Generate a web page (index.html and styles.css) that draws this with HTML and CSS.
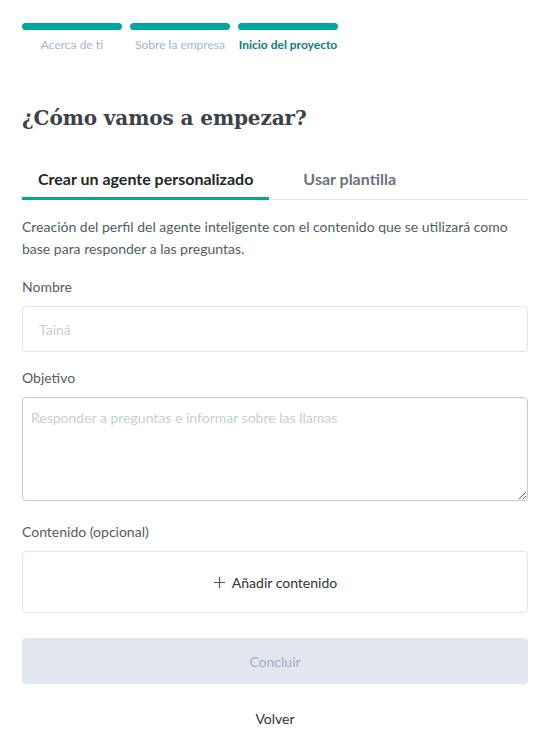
FILE: index.html
```html
<!doctype html>
<html lang="es">

<head>
    <meta charset="utf-8" />
    <meta name="viewport" content="width=device-width, initial-scale=1">
    <link rel="stylesheet" href="styles.css">
</head>

<body>
    <div class="page">
        <div class="steps">
            <div class="step done">
                <span class="bar"></span>
                <span class="steplabel">Acerca de ti</span>
            </div>
            <div class="step done">
                <span class="bar"></span>
                <span class="steplabel">Sobre la empresa</span>
            </div>
            <div class="step current">
                <span class="bar"></span>
                <span class="steplabel">Inicio del proyecto</span>
            </div>
        </div>

        <h1 class="title">¿Cómo vamos a empezar?</h1>

        <div class="tabs">
            <button class="tab active">Crear un agente personalizado</button>
            <button class="tab">Usar plantilla</button>
        </div>

        <p class="intro">
            Creación del perfil del agente inteligente con el contenido que se utilizará como
            base para responder a las preguntas.
        </p>

        <label class="field">
            <span class="fieldlabel">Nombre</span>
            <input class="input" type="text" placeholder="Tainá" />
        </label>

        <label class="field">
            <span class="fieldlabel">Objetivo</span>
            <textarea class="textarea" placeholder="Responder a preguntas e informar sobre las llamas"></textarea>
        </label>

        <div class="field content">
            <span class="fieldlabel">Contenido (opcional)</span>
            <button class="addbox">
                <svg width="13" height="13" viewBox="0 0 13 13">
                    <path d="M6.5 1v11M1 6.5h11" stroke="#555" stroke-width="1.2" fill="none" />
                </svg>
                Añadir contenido
            </button>
        </div>

        <button class="primary" disabled>Concluir</button>
        <button class="back">Volver</button>
    </div>
</body>

</html>
```

FILE: styles.css
```css
html {
    font-family: Lato, "Open Sans", sans-serif;
    font-size: 14px;
    color: #333;
}

body {
    margin: 0;
}

.page {
    padding: 23px 20px 0 22px;
    display: flex;
    flex-direction: column;
}

.steps {
    display: flex;
    gap: 8px;
}

.step {
    width: 100px;
    display: flex;
    flex-direction: column;
    align-items: center;
}

.bar {
    display: block;
    width: 100%;
    height: 7px;
    border-radius: 4px;
    background: #00a69c;
}

.steplabel {
    margin-top: 7px;
    font-size: 12px;
    line-height: 16px;
    color: #a9b1d6;
}

.current .steplabel {
    color: #0b7d7c;
    font-weight: 700;
}

.title {
    margin: 50px 0 0;
    font-family: "DejaVu Serif", serif;
    font-size: 20px;
    font-weight: 700;
    line-height: 30px;
    color: #3d414a;
    letter-spacing: -0.1px;
}

.tabs {
    margin-top: 29px;
    display: flex;
    border-bottom: 1px solid #e2e4e8;
}

.tab {
    font-family: inherit;
    font-size: 16px;
    font-weight: 700;
    line-height: 20px;
    background: none;
    border: none;
    padding: 7px 16px 8px;
    color: #6b7280;
    border-bottom: 3px solid transparent;
    margin-bottom: -1px;
    cursor: pointer;
}

.tab.active {
    color: #23262b;
    border-bottom-color: #00a69c;
}

.tab + .tab {
    padding-left: 34px;
}

.intro {
    margin: 16px 0 0;
    line-height: 22px;
    color: #555b66;
}

.field {
    display: flex;
    flex-direction: column;
    margin-top: 17px;
}

.fieldlabel {
    line-height: 20px;
    color: #555b66;
    margin-bottom: 9px;
}

.input,
.textarea {
    font-family: inherit;
    font-size: 14px;
    color: #333;
    border: 1px solid #e3e5ea;
    border-radius: 4px;
    box-sizing: border-box;
    width: 100%;
    outline: none;
}

.input {
    height: 46px;
    padding: 0 16px;
}

.textarea {
    height: 104px;
    padding: 10px 8px;
    border-color: #c8cacf;
    resize: vertical;
    line-height: 20px;
}

.input::placeholder,
.textarea::placeholder {
    color: #c9cdd5;
}

.field + .field {
    margin-top: 16px;
}

.field.content {
    margin-top: 21px;
}

.addbox {
    font-family: inherit;
    font-size: 14px;
    color: #333;
    height: 62px;
    background: #fff;
    border: 1px solid #e3e5ea;
    border-radius: 4px;
    display: flex;
    align-items: center;
    justify-content: center;
    gap: 6px;
    cursor: pointer;
}

.primary {
    margin-top: 25px;
    height: 46px;
    font-family: inherit;
    font-size: 14px;
    border: none;
    border-radius: 4px;
    background: #e2e6ee;
    color: #a4adc2;
}

.back {
    margin-top: 25px;
    align-self: center;
    font-family: inherit;
    font-size: 14px;
    background: none;
    border: none;
    color: #333;
    padding: 0;
    line-height: 20px;
    cursor: pointer;
}
```
